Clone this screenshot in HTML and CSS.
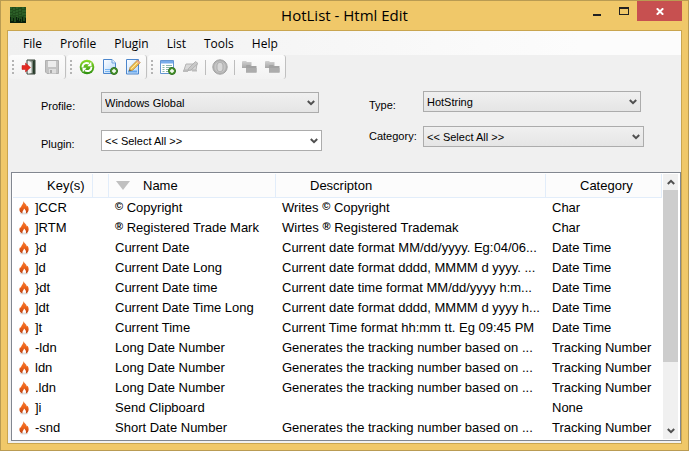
FILE: index.html
```html
<!DOCTYPE html>
<html lang="en">
<head>
<meta charset="utf-8">
<title>HotList - Html Edit</title>
<link rel="stylesheet" href="styles.css">
</head>
<body>
<svg class="defs" aria-hidden="true">
  <defs>
    <linearGradient id="flameFill" x1="0" y1="0" x2="0" y2="1"><stop offset="0" stop-color="#f0803c"/><stop offset=".5" stop-color="#f06418"/><stop offset="1" stop-color="#b83c10"/></linearGradient>
    <linearGradient id="pageFill" x1="0" y1="0" x2="1" y2="1"><stop offset="0" stop-color="#ffffff"/><stop offset="1" stop-color="#b4d6fa"/></linearGradient>
    <linearGradient id="greenFill" x1="0" y1="0" x2="0" y2="1"><stop offset="0" stop-color="#8ede28"/><stop offset="1" stop-color="#2c8e10"/></linearGradient>
    <linearGradient id="grayFill" x1="0" y1="0" x2="0" y2="1"><stop offset="0" stop-color="#d2d2d2"/><stop offset="1" stop-color="#a6a6a6"/></linearGradient>
    <linearGradient id="doorFill" x1="0" y1="0" x2="1" y2="0"><stop offset="0" stop-color="#f4f4f4"/><stop offset="1" stop-color="#3c4c3c"/></linearGradient>
    <symbol id="flame" viewBox="0 0 10 14">
      <ellipse cx="5" cy="12.6" rx="4" ry="1" fill="#dedede"/>
      <path d="M4.400 0C5 2 8 3.600 7.800 5.600L8.600 4.800C10.600 8 9.600 11.600 6.800 12.600C7.400 10.400 6.600 9 5 7.600C5 9.400 3 10.200 3.400 12.600C.4 11.600-.4 8.400 1.200 6L1.800 7C2 4.600 4.800 3 4.400 0Z" fill="url(#flameFill)"/>
    </symbol>
    <symbol id="chevron" viewBox="0 0 8 6"><path d="M.8 1L4 4.200L7.200 1" fill="none" stroke="#505050" stroke-width="2"/></symbol>
    <symbol id="plus" viewBox="0 0 8 8"><circle cx="4" cy="4" r="3.500" fill="#4e9a32" stroke="#2c6e1c"/><path d="M4 2V6M2 4H6" stroke="#fff" stroke-width="1.400"/></symbol>
    <symbol id="folders" viewBox="0 0 16 16">
      <path d="M1 3Q1 2 2 2H5L6 3H10.500V9H1Z" fill="url(#grayFill)"/>
      <path d="M5 7Q5 6 6 6H9L10 7H15.500V13.500H5Z" fill="#a2a2a2"/>
      <path d="M5 9H15.500V13.500H5Z" fill="#acacac"/>
    </symbol>
  </defs>
</svg>
<main class="window">
  <header class="titlebar">
    <svg class="app-icon" viewBox="0 0 16 16">
      <rect width="16" height="16" fill="#214c1c"/>
      <path d="M1 0V9M4 1V8M7 0V10M10 2V9M13 0V8M15 3V10" stroke="#397332" stroke-dasharray="2 1"/>
      <path d="M2 3V12M6 4V9M9 0V6M12 5V13M14 1V5" stroke="#2d6429" stroke-dasharray="1 2"/>
      <path d="M0 16V10H1V14H3V11H4V15H6V10H7V13H8V11H9V14H10V12H11V15H12V10H13V14H15V11H16V16Z" fill="#081f0c"/>
    </svg>
    <h1 class="title">HotList - Html Edit</h1>
    <div class="window-buttons">
      <button class="window-button" aria-label="Minimize"><svg width="8" height="12" viewBox="0 0 8 12"><path d="M0 9H8V11H0Z" fill="#222"/></svg></button>
      <button class="window-button" aria-label="Maximize"><svg width="10" height="8" viewBox="0 0 10 8"><path d="M0 0H10V8H0ZM1 2V7H9V2Z" fill="#222" fill-rule="evenodd"/></svg></button>
      <button class="window-button close" aria-label="Close"><svg width="8" height="7" viewBox="0 0 8 7"><path d="M.8 .3L7.200 6.700M7.200 .3L.8 6.700" stroke="#fff" stroke-width="2"/></svg></button>
    </div>
  </header>

  <div class="client">
    <nav class="menu">
      <button>File</button><button>Profile</button><button>Plugin</button><button>List</button><button>Tools</button><button>Help</button>
    </nav>

    <div class="toolbar">
      <div class="group">
        <span class="grip"></span>
        <button aria-label="Exit"><svg class="icon" viewBox="0 0 16 16">
          <path d="M6 1H14V15H6Z" fill="url(#doorFill)" stroke="#384438"/><path d="M7 2L10.500 3.500V14L7 14.500Z" fill="#eef0ee"/><path d="M12 2H13.500V14.500H12Z" fill="#263c2a"/>
          <path d="M1 6.500H4.500V4L9.500 8.500L4.500 13V10.500H1Z" fill="#e42a22" stroke="#c01818" stroke-width=".5"/>
        </svg></button>
        <button aria-label="Save"><svg class="icon" viewBox="0 0 16 16">
          <path d="M1.500 1.500H14.500V14.500H3L1.500 13Z" fill="#c3c3c3" stroke="#b0b0b0"/><path d="M4 2H12V8H4Z" fill="#ececec"/><path d="M5 10H12V14.500H5Z" fill="#dedede"/><path d="M6 11H8V14H6Z" fill="#aaa"/>
        </svg></button>
      </div>
      <div class="group">
        <span class="grip"></span>
        <button aria-label="Refresh"><svg class="icon" viewBox="0 0 16 16">
          <circle cx="8" cy="8" r="7.300" fill="url(#greenFill)"/>
          <path d="M3.500 8.500C3.400 4.600 7 3 10 4.600" fill="none" stroke="#fff" stroke-width="1.900"/><path d="M8.400 7.300L12.600 7.300L12.200 2.800Z" fill="#fff"/>
          <path d="M12.500 7.800C12.600 11.400 9 13 6 11.400" fill="none" stroke="#fff" stroke-width="1.900"/><path d="M7.600 8.700L3.400 8.700L3.800 13.200Z" fill="#fff"/>
        </svg></button>
        <button aria-label="New profile"><svg class="icon" viewBox="0 0 16 16">
          <path d="M1.500 .5H10L13.500 4V14.500H1.500Z" fill="url(#pageFill)" stroke="#4c86cc"/><path d="M10 .5V4H13.500" fill="#e8f3ff" stroke="#72a4dc"/><path d="M3 10.500H10M3 12.500H9" stroke="#78b6f2"/>
          <use href="#plus" x="8" y="8" width="8" height="8"/>
        </svg></button>
        <button aria-label="Edit profile"><svg class="icon" viewBox="0 0 16 16">
          <path d="M1.500 .5H13.500V15H1.500Z" fill="url(#pageFill)" stroke="#4c86cc"/><path d="M3 12.500H12" stroke="#64a6ec" stroke-width="2"/>
          <path d="M5 8.500L12.500 1L15.200 3.700L7.700 11.200L4.200 12Z" fill="#f2c250" stroke="#a8782c" stroke-width=".7"/><path d="M11.300 2.200L12.500 1L15.200 3.700L14 4.900Z" fill="#e6a086"/><path d="M6.300 9.800L12.700 3.400" stroke="#fff0b0"/><path d="M4.200 12L4.700 10.300L6 11.500Z" fill="#444"/>
        </svg></button>
      </div>
      <div class="group">
        <span class="grip"></span>
        <button aria-label="Add item"><svg class="icon" viewBox="0 0 16 16">
          <path d="M.5 1.500H13.500V14.500H.5Z" fill="#fff" stroke="#6496d2"/><path d="M1 2H13V4.500H1Z" fill="#78acea"/>
          <path d="M2.500 6.500H4.500M6 6.500H12M2.500 8.500H4.500M6 8.500H12M2.500 10.500H4.500M6 10.500H9M2.500 12.500H4.500M6 12.500H8" stroke="#8ab6a8"/>
          <use href="#plus" x="8" y="8" width="8" height="8"/>
        </svg></button>
        <button aria-label="Edit item"><svg class="icon" viewBox="0 0 16 16">
          <path d="M3 5H14L13 11H1Z" fill="#d8d8d8" stroke="#b4b4b4"/><path d="M0 11H5V13H0ZM9 11H14V12.500H9Z" fill="#bcbcbc"/><path d="M5.500 9.500L12.500 2.500L15 4.500L8 11L5 11.500Z" fill="#c8c8c8" stroke="#aaa" stroke-width=".8"/>
        </svg></button>
        <span class="separator"></span>
        <button aria-label="Stop"><svg class="icon" viewBox="0 0 16 16">
          <circle cx="8" cy="8" r="7.200" fill="#b4b4b4" stroke="#a2a2a2"/><circle cx="8" cy="8" r="5.600" fill="#c6c6c6"/><rect x="5" y="3.500" width="6" height="9" rx="2.500" fill="#d8d8d8" stroke="#adadad"/>
        </svg></button>
        <span class="separator"></span>
        <button aria-label="Copy"><svg class="icon" viewBox="0 0 16 16"><use href="#folders"/></svg></button>
        <button aria-label="Paste"><svg class="icon" viewBox="0 0 16 16"><use href="#folders"/></svg></button>
      </div>
    </div>

    <form class="filters">
      <div class="filter-column left">
        <div class="field">
          <label class="low" for="profile">Profile:</label>
          <span class="combo short"><select id="profile"><option>Windows Global</option></select><svg><use href="#chevron"/></svg></span>
        </div>
        <div class="field">
          <label class="low" for="plugin">Plugin:</label>
          <span class="combo editable"><select id="plugin"><option>&lt;&lt; Select All &gt;&gt;</option></select><svg><use href="#chevron"/></svg></span>
        </div>
      </div>
      <div class="filter-column right">
        <div class="field">
          <label class="low" for="type">Type:</label>
          <span class="combo short"><select id="type"><option>HotString</option></select><svg><use href="#chevron"/></svg></span>
        </div>
        <div class="field">
          <label for="category">Category:</label>
          <span class="combo"><select id="category"><option>&lt;&lt; Select All &gt;&gt;</option></select><svg><use href="#chevron"/></svg></span>
        </div>
      </div>
    </form>

    <section class="list">
      <table>
        <colgroup><col class="col-key"><col class="col-gap"><col class="col-name"><col class="col-desc"><col class="col-cat"></colgroup>
        <thead>
          <tr><th>Key(s)</th><th></th><th class="sorted"><span class="head"><svg viewBox="0 0 14 9"><path d="M0 0H14L7 9Z" fill="#c0c0c0"/></svg>Name</span></th><th>Descripton</th><th>Category</th></tr>
        </thead>
        <tbody>
          <tr><td colspan="2"><span class="key"><svg><use href="#flame"/></svg>]CCR</span></td><td><span class="mark">©</span> Copyright</td><td>Writes <span class="mark">©</span> Copyright</td><td>Char</td></tr>
          <tr><td colspan="2"><span class="key"><svg><use href="#flame"/></svg>]RTM</span></td><td><span class="mark">®</span> Registered Trade Mark</td><td>Wirtes <span class="mark">®</span> Registered Trademak</td><td>Char</td></tr>
          <tr><td colspan="2"><span class="key"><svg><use href="#flame"/></svg>}d</span></td><td>Current Date</td><td>Current date format MM/dd/yyyy. Eg:04/06...</td><td>Date Time</td></tr>
          <tr><td colspan="2"><span class="key"><svg><use href="#flame"/></svg>]d</span></td><td>Current Date Long</td><td>Current date format dddd, MMMM d yyyy. ...</td><td>Date Time</td></tr>
          <tr><td colspan="2"><span class="key"><svg><use href="#flame"/></svg>}dt</span></td><td>Current Date time</td><td>Current date time format MM/dd/yyyy h:m...</td><td>Date Time</td></tr>
          <tr><td colspan="2"><span class="key"><svg><use href="#flame"/></svg>]dt</span></td><td>Current Date Time Long</td><td>Current date format dddd, MMMM d yyyy h...</td><td>Date Time</td></tr>
          <tr><td colspan="2"><span class="key"><svg><use href="#flame"/></svg>]t</span></td><td>Current Time</td><td>Current Time format hh:mm tt. Eg 09:45 PM</td><td>Date Time</td></tr>
          <tr><td colspan="2"><span class="key"><svg><use href="#flame"/></svg>-ldn</span></td><td>Long Date Number</td><td>Generates the tracking number based on ...</td><td>Tracking Number</td></tr>
          <tr><td colspan="2"><span class="key"><svg><use href="#flame"/></svg>ldn</span></td><td>Long Date Number</td><td>Generates the tracking number based on ...</td><td>Tracking Number</td></tr>
          <tr><td colspan="2"><span class="key"><svg><use href="#flame"/></svg>.ldn</span></td><td>Long Date Number</td><td>Generates the tracking number based on ...</td><td>Tracking Number</td></tr>
          <tr><td colspan="2"><span class="key"><svg><use href="#flame"/></svg>]i</span></td><td>Send Clipboard</td><td></td><td>None</td></tr>
          <tr><td colspan="2"><span class="key"><svg><use href="#flame"/></svg>-snd</span></td><td>Short Date Number</td><td>Generates the tracking number based on ...</td><td>Tracking Number</td></tr>
        </tbody>
      </table>
      <div class="scrollbar">
        <svg class="up"><use href="#chevron"/></svg>
        <div class="track"><div class="thumb"></div></div>
        <svg><use href="#chevron"/></svg>
      </div>
    </section>
  </div>
</main>
</body>
</html>
```
FILE: styles.css
```css
* { box-sizing: border-box; }
body { margin: 0; color: #000; font-family: "Liberation Sans", Arial, sans-serif; }
button { padding: 0; border: 0; background: none; color: inherit; }
svg { display: block; flex: none; }
.defs { position: absolute; width: 0; height: 0; }

.window {
  display: flex;
  flex-direction: column;
  min-height: 100vh;
  padding: 0 6px 6px;
  border: 1px solid #b99b52;
  background: #f0c869;
}

.titlebar { display: grid; grid-template-columns: 1fr auto 1fr; height: 29px; }
.app-icon { width: 16px; height: 16px; margin: 6px 3px; }
.title { margin: 0; font: 15px/29px "Open Sans", "Segoe UI", sans-serif; }
.window-buttons { display: flex; justify-content: flex-end; }
.window-button { display: grid; place-items: center; width: 27px; height: 20px; }
.window-button.close { width: 45px; background: #c75050; }

.client {
  display: flex;
  flex: 1;
  flex-direction: column;
  border: 1px solid #c9a54f;
  background: #f0f0f0;
}

.menu {
  display: flex;
  gap: 18px;
  height: 24px;
  padding: 0 15px;
  background: linear-gradient(90deg, #f0f0f0, #fcfcfc 85%);
}
.menu button { font: 12px "Open Sans", "Segoe UI", sans-serif; }

.toolbar { display: flex; gap: 1px; height: 24px; padding-left: 1px; }
.group {
  display: flex;
  align-items: center;
  padding: 0 2px 0 3px;
  border-right: 1px solid #c0c0c0;
  border-radius: 3px;
  background: linear-gradient(#fcfcfc, #f2f2f2);
}
.group button { display: grid; place-items: center; width: 23px; height: 24px; }
.icon { width: 16px; height: 16px; }
.grip {
  width: 2px;
  height: 14px;
  margin-right: 3px;
  background: repeating-linear-gradient(#b4b4b4 0 2px, transparent 2px 4px);
}
.separator { width: 1px; height: 15px; margin: 0 2px 0 3px; background: #bdbdbd; }

.filters {
  display: grid;
  grid-template-columns: 281fr 275fr;
  gap: 47px;
  padding: 12px 37px 21px 33px;
  font-size: 11px;
}
.filter-column { display: flex; flex-direction: column; }
.left { gap: 17px; padding-top: 1px; }
.right { gap: 14px; }
.field { display: grid; grid-template-columns: 60px 1fr; align-items: start; height: 21px; line-height: 21px; }
.right .field { grid-template-columns: 54px 1fr; }
.low { padding-top: 4px; }
.combo { display: grid; align-items: center; }
.combo.short { margin-right: 3px; }
.combo select, .combo svg { grid-area: 1 / 1; }
.combo svg { justify-self: end; width: 8px; height: 6px; margin-right: 4px; pointer-events: none; }
.combo select {
  appearance: none;
  width: 100%;
  height: 21px;
  padding: 0 3px;
  border: 1px solid #acacac;
  border-radius: 0;
  background: linear-gradient(#f0f0f0, #e5e5e5);
  color: #000;
  font: inherit;
}
.combo.editable select { background: #fff; }

.list {
  display: flex;
  flex: 1;
  justify-content: space-between;
  margin: 0 0 2px 3px;
  padding: 1px 2px 1px 1px;
  border: 1px solid #828790;
  background: #fff;
  font-size: 13px;
}
table { flex: 1; align-self: flex-start; table-layout: fixed; width: 0; border-collapse: separate; border-spacing: 0; }
.col-key { width: 80px; }
.col-gap { width: 16px; }
.col-name { width: 167px; }
.col-cat { width: 116px; }
th {
  height: 24px;
  padding: 0 0 0 34px;
  border-right: 1px solid #e2edfa;
  border-bottom: 1px solid #e2edfa;
  background: #fcfcfc;
  font-weight: normal;
  text-align: left;
}
th:nth-child(2) { padding: 0; }
th.sorted { padding-left: 7px; }
.head { display: flex; align-items: center; gap: 13px; }
.head svg { width: 14px; height: 9px; }
td { height: 20px; padding: 0 0 0 6px; line-height: 20px; white-space: nowrap; overflow: hidden; }
.key { display: flex; align-items: center; gap: 6px; }
.key svg { width: 10px; height: 14px; }
.mark { font-size: 11px; font-weight: bold; line-height: 1; vertical-align: 2px; }

.scrollbar { display: flex; flex-direction: column; align-items: center; width: 15px; margin-left: 1px; background: #f0f0f0; }
.scrollbar svg { width: 8px; height: 6px; margin: 5px 0; }
.scrollbar .up { transform: rotate(180deg); }
.track { flex: 1; width: 100%; }
.thumb { height: 74%; background: #cdcdcd; }
```
